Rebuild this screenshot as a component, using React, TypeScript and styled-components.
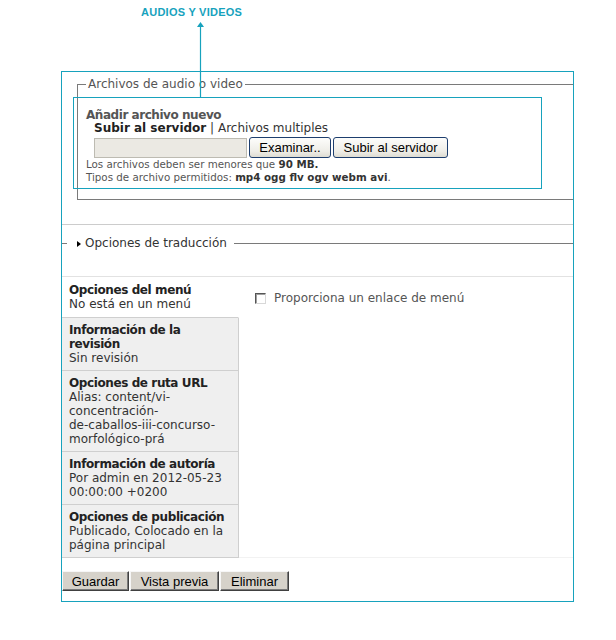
import React from 'react';
import styled, { createGlobalStyle } from 'styled-components';

const TEAL = '#17a2bd';

const GlobalStyle = createGlobalStyle`
  body {
    margin: 0;
    background: #fff;
    font-family: 'DejaVu Sans', Verdana, sans-serif;
    font-size: 12px;
    color: #222;
  }
`;

const Page = styled.div`
  position: relative;
  width: 616px;
  padding-bottom: 38px;
`;

const Caption = styled.div`
  height: 71px;
  padding: 5px 0 0 141px;
  box-sizing: border-box;
  font-family: 'Liberation Sans', Arial, sans-serif;
  font-weight: bold;
  font-size: 11px;
  letter-spacing: 0.25px;
  line-height: 14px;
  color: ${TEAL};
`;

const Frame = styled.div`
  margin-left: 61px;
  width: 513px;
  box-sizing: border-box;
  border: 1px solid ${TEAL};
  padding-bottom: 10px;
`;

const Highlight = styled.div`
  position: absolute;
  left: 73px;
  top: 97px;
  width: 469px;
  height: 92px;
  box-sizing: border-box;
  border: 1px solid ${TEAL};
  pointer-events: none;
`;

const Arrow = styled.svg`
  position: absolute;
  left: 196px;
  top: 22px;
`;

const UploadSet = styled.fieldset`
  margin: 5px 0 0 15px;
  border: 1px solid #7a7a7a;
  border-right: none;
  padding: 18px 0 15px 8px;
  min-width: 0;
`;

const Legend = styled.legend`
  padding: 0 2px;
  line-height: 14px;
  color: #555;
`;

const Heading = styled.div`
  font-weight: bold;
  letter-spacing: -0.45px;
  color: #555;
  line-height: 13px;
`;

const SourceLine = styled.div`
  padding-left: 8px;
  line-height: 13px;
  color: #333;
  b {
    color: #222;
  }
`;

const FileRow = styled.div`
  display: flex;
  gap: 2px;
  margin: 3px 0 0 8px;
  height: 20px;
`;

const FileField = styled.div`
  width: 153px;
  box-sizing: border-box;
  border: 1px solid #bdbbb2;
  background: #ebe9e3;
`;

const XpButton = styled.button<{ $w: number }>`
  width: ${(p) => p.$w}px;
  height: 21px;
  margin-top: -1px;
  box-sizing: border-box;
  border: 1px solid #1d3e6e;
  border-radius: 3px;
  background: linear-gradient(#fdfdfb, #eeede7 70%, #dedcd2);
  font-family: 'Liberation Sans', Arial, sans-serif;
  font-size: 13px;
  color: #000;
  padding: 0;
`;

const Note = styled.div`
  font-size: 10.3px;
  line-height: 13px;
  color: #555;
  b {
    color: #333;
  }
`;

const Rule = styled.div<{ $gap: number; $color: string }>`
  margin-top: ${(p) => p.$gap}px;
  border-top: 1px solid ${(p) => p.$color};
`;

const CollapsedSet = styled.fieldset`
  margin: 11px 0 0 0;
  padding: 0 0 0 5px;
  border: none;
  border-top: 1px solid #7a7a7a;
  min-width: 0;
`;

const CollapsedLegend = styled.legend`
  padding: 0 7px 0 10px;
  line-height: 14px;
  color: #333;
`;

const Caret = styled.span`
  display: inline-block;
  width: 0;
  height: 0;
  border-top: 3.5px solid transparent;
  border-bottom: 3.5px solid transparent;
  border-left: 4px solid #000;
  margin-right: 4px;
  vertical-align: 0;
`;

const Tabs = styled.div`
  display: flex;
`;

const TabList = styled.div`
  width: 177px;
  flex: none;
`;

const Tab = styled.div<{ $active?: boolean }>`
  padding: ${(p) => (p.$active ? '6px 7px' : '5px 7px')};
  line-height: 14px;
  background: ${(p) => (p.$active ? '#fff' : '#efefef')};
  border-bottom: 1px solid #cfcfcf;
  border-right: 1px solid ${(p) => (p.$active ? '#fff' : '#cfcfcf')};
  color: #333;
  white-space: nowrap;
`;

const TabTitle = styled.strong`
  display: block;
  letter-spacing: -0.4px;
  color: #222;
`;

const Pane = styled.div`
  flex: 1;
  padding: 14px 0 0 16px;
  border-bottom: 1px solid #f2f2f2;
`;

const CheckRow = styled.label`
  display: flex;
  align-items: center;
  gap: 8px;
  line-height: 14px;
  color: #555;
`;

const Check = styled.span`
  width: 11px;
  height: 11px;
  box-sizing: border-box;
  border: 1px solid;
  border-color: #555 #d8d8d8 #d8d8d8 #555;
  background: #fff;
  box-shadow: inset 1px 1px #a0a0a0;
`;

const Actions = styled.div`
  display: flex;
  gap: 1px;
  margin-top: 13px;
`;

const ClassicButton = styled.button<{ $w: number }>`
  width: ${(p) => p.$w}px;
  height: 20px;
  box-sizing: border-box;
  padding: 0;
  background: #d6d2ca;
  border: 1px solid;
  border-color: #f6f6f6 #404040 #404040 #f6f6f6;
  box-shadow: inset -1px -1px #7a7a7a;
  font-family: 'Liberation Sans', Arial, sans-serif;
  font-size: 13px;
  color: #000;
`;

const lines = (items: string[]) =>
  items.map((line, i) => (
    <React.Fragment key={i}>
      {line}
      {i < items.length - 1 && <br />}
    </React.Fragment>
  ));

const tabs = [
  { title: ['Opciones del menú'], body: ['No está en un menú'], active: true },
  { title: ['Información de la', 'revisión'], body: ['Sin revisión'] },
  {
    title: ['Opciones de ruta URL'],
    body: ['Alias: content/vi-', 'concentración-', 'de-caballos-iii-concurso-', 'morfológico-prá'],
  },
  { title: ['Información de autoría'], body: ['Por admin en 2012-05-23', '00:00:00 +0200'] },
  { title: ['Opciones de publicación'], body: ['Publicado, Colocado en la', 'página principal'] },
];

const App = () => {
  return (
    <Page>
      <GlobalStyle />
      <Caption>AUDIOS Y VIDEOS</Caption>
      <Frame>
        <UploadSet>
          <Legend>Archivos de audio o video</Legend>
          <Heading>Añadir archivo nuevo</Heading>
          <SourceLine>
            <b>Subir al servidor</b> | Archivos multiples
          </SourceLine>
          <FileRow>
            <FileField />
            <XpButton $w={82}>Examinar..</XpButton>
            <XpButton $w={115}>Subir al servidor</XpButton>
          </FileRow>
          <Note>
            Los archivos deben ser menores que <b>90 MB.</b>
          </Note>
          <Note>
            Tipos de archivo permitidos: <b>mp4 ogg flv ogv webm avi</b>.
          </Note>
        </UploadSet>
        <Rule $gap={24} $color="#cccccc" />
        <CollapsedSet>
          <CollapsedLegend>
            <Caret />
            Opciones de traducción
          </CollapsedLegend>
        </CollapsedSet>
        <Rule $gap={26} $color="#e2e2e2" />
        <Tabs>
          <TabList>
            {tabs.map((t) => (
              <Tab key={t.title[0]} $active={t.active}>
                <TabTitle>{lines(t.title)}</TabTitle>
                {lines(t.body)}
              </Tab>
            ))}
          </TabList>
          <Pane>
            <CheckRow>
              <Check />
              Proporciona un enlace de menú
            </CheckRow>
          </Pane>
        </Tabs>
        <Actions>
          <ClassicButton $w={67}>Guardar</ClassicButton>
          <ClassicButton $w={89}>Vista previa</ClassicButton>
          <ClassicButton $w={69}>Eliminar</ClassicButton>
        </Actions>
      </Frame>
      <Highlight />
      <Arrow width="9" height="76" viewBox="0 0 9 76">
        <polygon points="4.5,0 1,5 8,5" fill={TEAL} />
        <line x1="4.5" y1="4" x2="4.5" y2="76" stroke={TEAL} strokeWidth="1.2" />
      </Arrow>
    </Page>
  );
};

export default App;
